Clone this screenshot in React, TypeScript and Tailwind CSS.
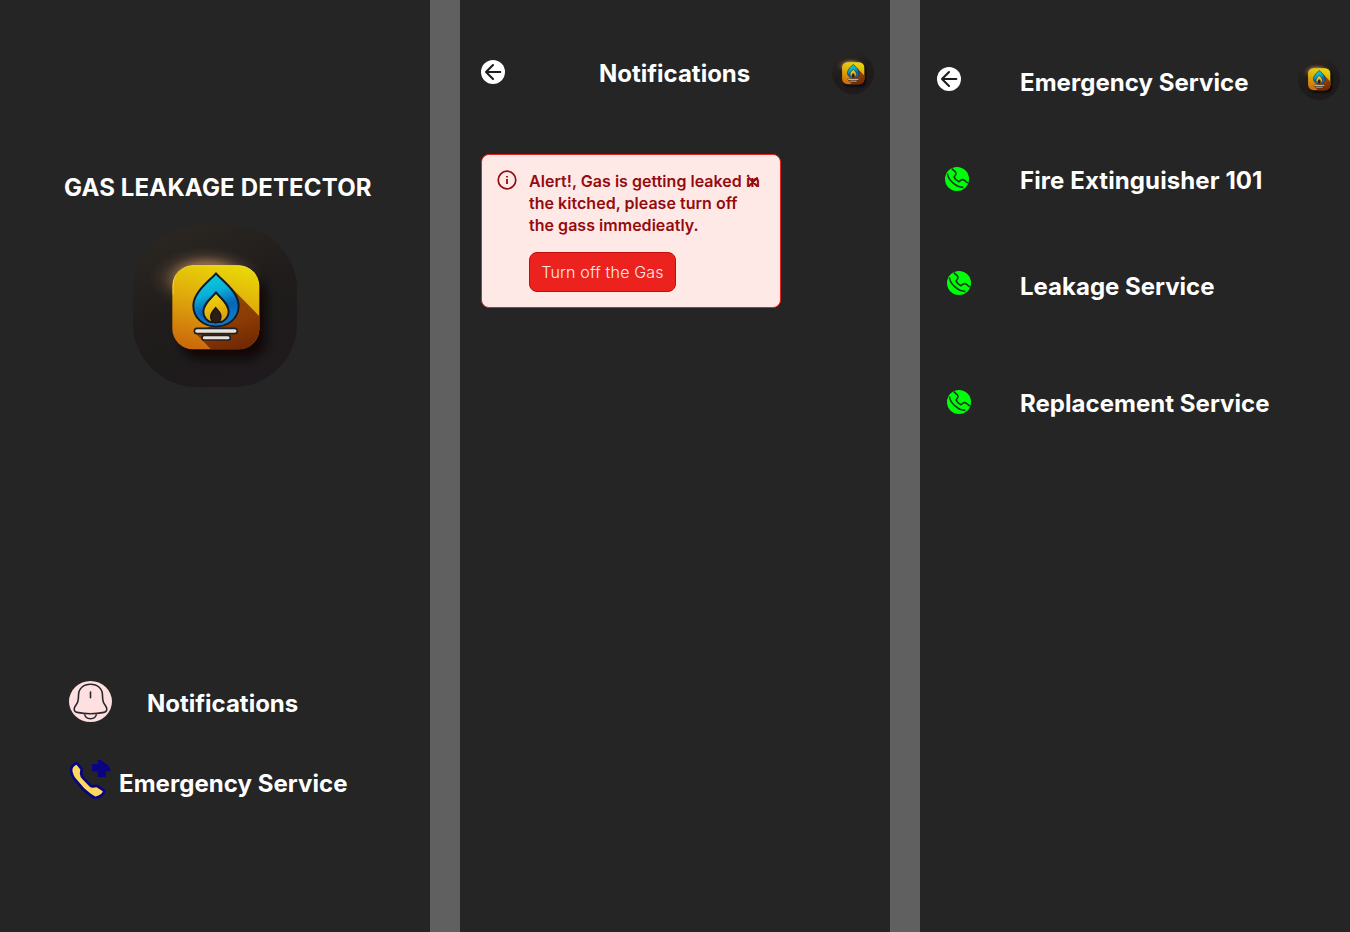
import { useId } from "react";

const heading = "whitespace-nowrap text-[24px] leading-[29px] font-bold text-white";

function GasLogo({ className, rx }: { className: string; rx: number }) {
  const id = useId().replace(/[^a-zA-Z0-9]/g, "");
  const ref = (name: string) => `url(#${name}${id})`;
  return (
    <svg className={className} viewBox="24 24 492 483" preserveAspectRatio="none" aria-label="Gas logo">
      <defs>
        <linearGradient id={`back${id}`} x1="0.2" y1="0" x2="0.6" y2="1">
          <stop offset="0" stopColor="#2b2722" />
          <stop offset="0.5" stopColor="#1f1c1b" />
          <stop offset="1" stopColor="#1e1a1d" />
        </linearGradient>
        <linearGradient id={`tile${id}`} x1="0.6" y1="0" x2="0.35" y2="1">
          <stop offset="0" stopColor="#e8d608" />
          <stop offset="0.45" stopColor="#e0a90b" />
          <stop offset="1" stopColor="#cb6a0b" />
        </linearGradient>
        <linearGradient id={`shade${id}`} x1="0.3" y1="0" x2="0.6" y2="1">
          <stop offset="0" stopColor="#8e4d05" />
          <stop offset="0.55" stopColor="#8c3c04" />
          <stop offset="1" stopColor="#712703" />
        </linearGradient>
        <linearGradient id={`flame${id}`} x1="0.35" y1="0" x2="0.65" y2="1">
          <stop offset="0" stopColor="#08d3d3" />
          <stop offset="0.35" stopColor="#0bafd8" />
          <stop offset="0.65" stopColor="#0765b9" />
          <stop offset="1" stopColor="#0b86ce" />
        </linearGradient>
        <linearGradient id={`core${id}`} x1="0" y1="0" x2="0.3" y2="1">
          <stop offset="0" stopColor="#f4e00d" />
          <stop offset="1" stopColor="#dfa20c" />
        </linearGradient>
        <radialGradient id={`glow${id}`}>
          <stop offset="0" stopColor="#d59a68" stopOpacity="0.9" />
          <stop offset="0.5" stopColor="#c08a5e" stopOpacity="0.6" />
          <stop offset="0.75" stopColor="#806044" stopOpacity="0.22" />
          <stop offset="1" stopColor="#4a3a2b" stopOpacity="0" />
        </radialGradient>
        <filter id={`blur${id}`} filterUnits="userSpaceOnUse" x="24" y="24" width="492" height="483">
          <feGaussianBlur stdDeviation="15" />
        </filter>
        <clipPath id={`outer${id}`}>
          <rect x="24" y="24" width="492" height="483" rx={rx} />
        </clipPath>
        <clipPath id={`inner${id}`}>
          <rect x="142" y="142" width="261" height="252" rx="62" />
        </clipPath>
      </defs>
      <g clipPath={ref("outer")}>
        <rect x="24" y="24" width="492" height="483" fill={ref("back")} />
        <rect x="165" y="172" width="258" height="250" rx="60" fill="#080405" opacity="0.75" filter={ref("blur")} />
        <ellipse cx="245" cy="182" rx="175" ry="98" fill={ref("glow")} />
        <rect x="142" y="142" width="261" height="252" rx="62" fill={ref("tile")} />
        <g clipPath={ref("inner")}>
          <path d="M320 210L410 302V400H264L208 342L270 320Z" fill={ref("shade")} />
          <path d="M144 230V205Q146 144 205 143H340Q375 144 392 170" fill="none" stroke="#f4e77a" strokeWidth="3" opacity="0.7" />
        </g>
        <path d="M273 166C257 186 205 221 205 263C205 300 235 325 273 325C311 325 341 300 341 263C341 221 289 186 273 166Z" fill={ref("flame")} stroke="#101a2a" strokeWidth="6" strokeLinejoin="round" />
        <path d="M216 280C224 306 247 320 273 320C299 320 323 306 331 280" fill="none" stroke="#1474bd" strokeWidth="5" />
        <path d="M273 223C262 239 235 255 235 281C235 299 248 310 257 312H289C299 309 311 297 311 281C311 255 284 239 273 223Z" fill={ref("core")} stroke="#121b29" strokeWidth="6" strokeLinejoin="round" />
        <path d="M272 269C266 277 257 284 257 295C257 307 264 314 272 315C281 314 288 307 288 295C288 284 279 277 272 269Z" fill="#2c1d17" stroke="#161719" strokeWidth="4" />
        <rect x="208" y="331" width="129" height="16" rx="8" fill="#e6e2db" stroke="#202124" strokeWidth="5" />
        <rect x="231" y="352" width="85" height="14" rx="7" fill="#e6e2db" stroke="#202124" strokeWidth="5" />
      </g>
    </svg>
  );
}

function BackButton() {
  return (
    <button className="block size-6" aria-label="Back">
      <svg className="size-6" viewBox="0 0 24 24">
        <circle cx="12" cy="12" r="12" fill="#fff" />
        <path d="M19.3 12H5M12 5L5 12L12 19" fill="none" stroke="#1e1e1e" strokeWidth="2.1" strokeLinecap="round" strokeLinejoin="round" />
      </svg>
    </button>
  );
}

function GreenPhone() {
  return (
    <svg className="size-6 shrink-0" viewBox="0 0 24 24">
      <circle cx="12" cy="12" r="12" fill="#00ff0a" />
      <path d="M2.4 6.5C3.2 13 11.2 20.6 18.4 20.4M6.8 1.6L10.3 4.8Q11.6 6.2 10.7 7.8L9 9.9Q10.4 13.2 13.9 14.8L16 13.2Q17.7 12 19.5 13.4L22.8 16.2" fill="none" stroke="#20351f" strokeWidth="1.6" strokeLinejoin="round" />
    </svg>
  );
}

function BellIcon() {
  return (
    <svg className="h-[41px] w-[43px]" viewBox="0 0 43 41">
      <ellipse cx="21.5" cy="20.5" rx="21.5" ry="20.5" fill="#ffe0e0" />
      <path d="M9.5 14.5C9.5 7.5 14.5 3.3 21.5 3.3S33.5 7.5 33.5 14.5C33.5 20.5 34.5 22 37 25.5C38.5 28 38 30.8 35 31.4Q21.5 34 8 31.4C5 30.8 4.5 28 6 25.5C8.5 22 9.5 20.5 9.5 14.5ZM15.5 33C16 36.2 18.3 37.7 21.5 37.7S27 36.2 27.5 33M21.5 11V16.8" fill="none" stroke="#292830" strokeWidth="1.6" strokeLinecap="round" />
    </svg>
  );
}

function EmergencyIcon() {
  return (
    <svg className="h-10 w-[42px]" viewBox="0 0 42 40">
      <path d="M7.5 4.7L11.3 9.5L10.8 13.5Q11 17 13.5 19.3L20.5 26.5Q22 28 24.2 27.7L27.5 27.2L33.8 31.3Q33 34.8 26.5 36.4Q23.5 35.7 15 28L6 17.5Q2.5 11.5 3.7 8.2Q4.5 6 7.5 4.7Z" fill="#ffd95c" stroke="#090580" strokeWidth="5.4" strokeLinejoin="round" paintOrder="stroke" />
      <path d="M23 4H28.7V0H32L39.5 5.5L42 11.3H37V17H28.7V11.3H23Z" fill="#090580" />
    </svg>
  );
}

function HomeScreen() {
  return (
    <section className="flex h-full w-[430px] shrink-0 flex-col bg-[#252525]">
      <h1 className={`${heading} mt-[173px] ml-16 tracking-[0.16px]`}>GAS LEAKAGE DETECTOR</h1>
      <GasLogo className="mt-6 ml-[133px] h-[161px] w-[164px]" rx={190} />
      <nav className="mt-[294px] flex flex-col">
        <a className="ml-[69px] flex h-[41px] items-start">
          <BellIcon />
          <span className={`${heading} mt-2 ml-[35px]`}>Notifications</span>
        </a>
        <a className="mt-[38px] ml-[69px] flex h-10 items-start">
          <EmergencyIcon />
          <span className={`${heading} mt-[9px] ml-2 tracking-[0.05px]`}>Emergency Service</span>
        </a>
      </nav>
    </section>
  );
}

function NotificationsScreen() {
  return (
    <section className="h-full w-[430px] shrink-0 bg-[#252525]">
      <header className="flex items-start pt-[52px] pl-[21px]">
        <div className="mt-2"><BackButton /></div>
        <h2 className={`${heading} mt-[7px] ml-[94px] w-[233px]`}>Notifications</h2>
        <GasLogo className="size-[42px] shrink-0" rx={246} />
      </header>
      <div className="relative mt-[60px] ml-[21px] flex h-[154px] w-[300px] rounded-lg border border-[#e3211e] bg-[#ffe9e7] pt-[15px] pl-[15px]">
        <svg className="size-5 shrink-0" viewBox="0 0 20 20">
          <circle cx="10" cy="10" r="8.8" fill="none" stroke="#940b0e" strokeWidth="1.7" />
          <path d="M10 9V14M10 6V7.5" stroke="#940b0e" strokeWidth="1.8" />
        </svg>
        <div className="ml-3">
          <p className="whitespace-nowrap text-[16px] leading-[22px] font-semibold tracking-[0.03px] text-[#940b0e]">
            Alert!, Gas is getting leaked in<br />the kitched, please turn off<br />the gass immedieatly.
          </p>
          <button className="mt-4 h-10 w-[147px] rounded-lg border border-[#c00f0c] bg-[#ec221f] text-[16px] leading-4 font-light tracking-[0.17px] whitespace-nowrap text-[#fee9e7]">Turn off the Gas</button>
        </div>
        <svg className="absolute top-[22px] left-[266px] h-[10px] w-[10px]" viewBox="0 0 10 10">
          <path d="M1 1L9 9M9 1L1 9" stroke="#940b0e" strokeWidth="2" strokeLinecap="round" />
        </svg>
      </div>
    </section>
  );
}

function EmergencyScreen() {
  return (
    <section className="h-full w-[430px] shrink-0 bg-[#252525]">
      <header className="flex items-start pt-[58px] pl-[17px]">
        <div className="mt-[9px]"><BackButton /></div>
        <h2 className={`${heading} mt-[10px] ml-[59px] w-[278px] tracking-[0.05px]`}>Emergency Service</h2>
        <GasLogo className="size-[42px] shrink-0" rx={246} />
      </header>
      <ul>
        <li className="mt-[66px] ml-[25px] flex h-[29px] items-start">
          <div className="mt-px"><GreenPhone /></div>
          <span className={`${heading} ml-[51px] tracking-[0.1px]`}>Fire Extinguisher 101</span>
        </li>
        <li className="mt-[76px] ml-[27px] flex h-[30px] items-start">
          <GreenPhone />
          <span className={`${heading} mt-px ml-[49px]`}>Leakage Service</span>
        </li>
        <li className="mt-[88px] ml-[27px] flex h-[30px] items-start">
          <div className="mt-px"><GreenPhone /></div>
          <span className={`${heading} ml-[49px] tracking-[0.04px]`}>Replacement Service</span>
        </li>
      </ul>
    </section>
  );
}

export default function App() {
  return (
    <main className="flex h-[932px] w-[1350px] gap-[30px] overflow-hidden bg-[#606060] font-['Inter',sans-serif]">
      <HomeScreen />
      <NotificationsScreen />
      <EmergencyScreen />
    </main>
  );
}
